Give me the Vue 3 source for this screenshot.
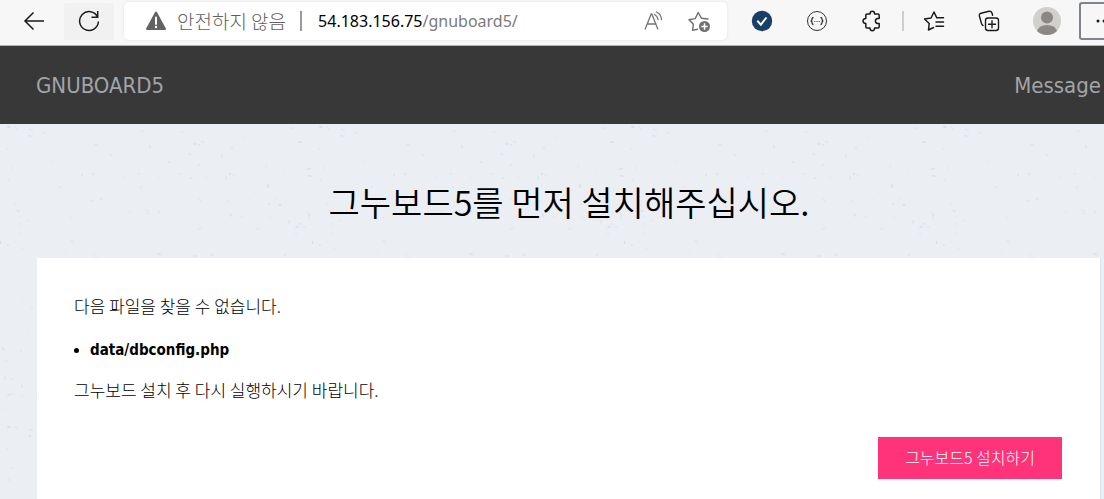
<script setup>
import { ref } from 'vue'

const host = ref('54.183.156.75')
const path = ref('/gnuboard5/')

// Deterministic flecks for the paper background tile
let seed = 41
const rnd = () => {
  seed = (seed * 16807) % 2147483647
  return seed / 2147483647
}
const flecks = Array.from({ length: 210 }, () => {
  const x = Math.round(rnd() * 312)
  const y = Math.round(rnd() * 300)
  return {
    x,
    y,
    rx: 1 + rnd() * 1.4,
    ry: 0.6 + rnd() * 0.6,
    turn: `rotate(${Math.round(rnd() * 90 - 20)} ${x} ${y})`,
    opacity: 0.2 + rnd() * 0.6
  }
})
</script>

<template>
  <div class="window">
    <nav class="toolbar" aria-label="브라우저">
      <button class="tool back" type="button" aria-label="뒤로">
        <svg width="22" height="22" viewBox="0 0 22 22" fill="none" stroke="#1b1b1b" stroke-width="1.5">
          <path d="M10.500 2.500 2 11l8.500 8.500M2 11h19" />
        </svg>
      </button>
      <button class="tool reload" type="button" aria-label="새로 고침">
        <svg width="22" height="22" viewBox="0 0 22 22" fill="none" stroke="#1b1b1b" stroke-width="1.500">
          <path d="M19.500 7A9.400 9.400 0 1 0 20.400 11.500M19.700 1v6.200h-6.200" />
        </svg>
      </button>

      <div class="address">
        <svg width="22" height="20" viewBox="0 0 22 20">
          <path d="M11 1.500 20 18H2z" fill="#636363" stroke="#636363" stroke-width="2" stroke-linejoin="round" />
          <path d="M11 6.500v6.500" stroke="#fff" stroke-width="2" stroke-linecap="round" />
          <circle cx="11" cy="16" r="1.200" fill="#fff" />
        </svg>
        <span class="insecure">안전하지 않음</span>
        <span class="bar"></span>
        <a class="url" href="#"><span class="host">{{ host }}</span>{{ path }}</a>
        <button class="icon" type="button" aria-label="소리내어 읽기">
          <svg width="22" height="22" viewBox="0 0 22 22" fill="none" stroke="#767676" stroke-width="1.300">
            <path d="M2 19.500 8.200 4h.6L15 19.500M4.200 14h8.600" />
            <path d="M11.500 4.500q3 1.500 3.500 5M13.500 2q4.500 2 5 7.500" stroke-linecap="round" />
          </svg>
        </button>
        <button class="icon star" type="button" aria-label="즐겨찾기에 추가">
          <svg width="24" height="24" viewBox="0 0 24 24" fill="none">
            <path d="M10.500 20.200 5.600 21.400 6.400 15.200 2 10.700 8.200 9.600 11.200 3.500 14.400 9.200 21 10" stroke="#707070" stroke-width="1.400" stroke-linejoin="round" stroke-linecap="round" />
            <circle cx="17.500" cy="17.500" r="5.500" fill="#707070" />
            <path d="M17.500 14.300v6.400M14.300 17.500h6.400" stroke="#fff" stroke-width="1.500" />
          </svg>
        </button>
      </div>

      <div class="extensions">
        <button class="icon" type="button" aria-label="확인">
          <svg width="22" height="22" viewBox="0 0 22 22" fill="none">
            <circle cx="11" cy="11" r="10.200" fill="#173f68" />
            <path d="m6.300 10.800 3.600 3.800L15.500 7.500" stroke="#fff" stroke-width="2" />
          </svg>
        </button>
        <button class="icon" type="button" aria-label="JSON">
          <svg width="22" height="22" viewBox="0 0 22 22" fill="none" stroke="#333">
            <circle cx="11" cy="11" r="9.500" />
            <path d="M7.500 7.500q-1.500 0-1.500 1.800 0 1.500-1.300 1.700 1.300.2 1.300 1.700 0 1.800 1.500 1.800M14.500 7.500q1.500 0 1.500 1.800 0 1.500 1.300 1.700-1.300.2-1.300 1.700 0 1.800-1.500 1.800" stroke-width="1.300" />
            <path d="M8.300 11.500h1M10.500 11.500h1M12.700 11.500h1" />
          </svg>
        </button>
        <button class="icon" type="button" aria-label="확장">
          <svg width="22" height="22" viewBox="0 0 22 22" fill="none" stroke="#1b1b1b" stroke-width="1.500" stroke-linejoin="round">
            <path d="M6 4h3q0-2.700 2.300-2.700T13.600 4H17q1.200 0 1.200 1.200V8.500h-1.500q-2.300.3-2.300 2.500t2.300 2.500h1.500v3.300q0 1.200-1.200 1.200h-3.400q0 2.700-2.300 2.700T9 18H6q-1.200 0-1.200-1.200v-3.300Q2 13.300 2 11t2.800-2.500V5.200Q4.800 4 6 4z" />
          </svg>
        </button>
        <span class="divider"></span>
        <button class="icon" type="button" aria-label="즐겨찾기">
          <svg width="22" height="22" viewBox="0 0 22 22" fill="none" stroke="#1b1b1b" stroke-width="1.500" stroke-linejoin="round" stroke-linecap="round">
            <path d="M10.500 17.500 5.500 20 6.200 13.500 1.500 9 8 8 11 2 13.800 7.800H20.500M13 12h7.500M13 16.200h7.500" />
          </svg>
        </button>
        <button class="icon" type="button" aria-label="컬렉션">
          <svg width="22" height="22" viewBox="0 0 22 22" fill="none" stroke="#1b1b1b" stroke-width="1.400" stroke-linejoin="round" stroke-linecap="round">
            <rect x="7.500" y="8" width="13" height="12.500" rx="2.500" />
            <path d="M14 10.800v7M10.500 14.300h7M5 15.500Q4 15 3.500 13.500L1.400 6Q1 3.800 3 3.200L11 1.300Q13.300 1 14 3l.6 2.300" />
          </svg>
        </button>
        <button class="icon" type="button" aria-label="프로필">
          <svg width="28" height="28" viewBox="0 0 28 28">
            <circle cx="14" cy="14" r="14" fill="#d2d0cd" />
            <circle cx="14" cy="10.500" r="6" fill="#8a8784" />
            <path d="M4 24Q6 18 14 18t10 6q-4 4-10 4T4 24" fill="#8a8784" />
          </svg>
        </button>
      </div>
      <button class="more" type="button" aria-label="설정 및 기타">
        <svg width="22" height="22" viewBox="0 0 22 22" fill="#1b1b1b">
          <circle cx="5" cy="11" r="1.500" />
          <circle cx="11" cy="11" r="1.500" />
          <circle cx="17" cy="11" r="1.500" />
        </svg>
      </button>
    </nav>

    <header class="banner">
      <span>GNUBOARD5</span>
      <span>Message</span>
    </header>

    <main class="page">
      <svg class="paper" width="100%" height="100%" aria-hidden="true">
        <defs>
          <pattern id="paper" width="312" height="300" patternUnits="userSpaceOnUse">
            <ellipse v-for="(f, i) in flecks" :key="i" :cx="f.x" :cy="f.y" :rx="f.rx" :ry="f.ry" :transform="f.turn" :opacity="f.opacity" fill="#d8dde3" />
          </pattern>
        </defs>
        <rect width="100%" height="100%" fill="url(#paper)" />
      </svg>
      <h1>그누보드5를 먼저 설치해주십시오.</h1>
      <section class="card">
        <p>다음 파일을 찾을 수 없습니다.</p>
        <ul>
          <li><strong>data/dbconfig.php</strong></li>
        </ul>
        <p>그누보드 설치 후 다시 실행하시기 바랍니다.</p>
        <div class="actions">
          <a class="install" href="#">그누보드5 설치하기</a>
        </div>
      </section>
    </main>
  </div>
</template>

<style>
body {
  background: #ebeff4;
  overflow: hidden;
}
</style>

<style scoped>
.window {
  display: flex;
  flex-direction: column;
  min-height: 100vh;
  overflow: hidden;
  color: #000;
  font-family: "Liberation Sans", "Noto Sans CJK KR", sans-serif;
}
button {
  display: flex;
  align-items: center;
  justify-content: center;
  margin: 0;
  padding: 0;
  border: 0;
  background: none;
}
svg {
  display: block;
  flex: none;
}
.toolbar {
  display: flex;
  align-items: center;
  height: 46px;
  padding: 0 0 3px 9px;
  box-sizing: border-box;
  background: #f7f7f7;
  border-bottom: 1px solid #b4b4b4;
}
.tool {
  width: 50px;
  height: 37px;
  border-radius: 3px;
}
.reload {
  margin-left: 5px;
  background: #f1f1f1;
}
.address {
  display: flex;
  flex: 1;
  align-items: center;
  height: 38px;
  margin-left: 10px;
  padding: 0 16px 0 21px;
  background: #fff;
  border-radius: 5px;
  box-shadow: 0 0 3px #e2e2e2;
}
.insecure {
  margin-left: 10px;
  color: #606060;
  font: 300 19px/28px "Noto Sans CJK KR", sans-serif;
}
.bar {
  width: 2px;
  height: 20px;
  margin: 0 16px 0 14px;
  background: #9a9a9a;
}
.url {
  flex: 1;
  color: #7a7a7a;
  font: 16px/24px "Noto Sans", sans-serif;
  text-decoration: none;
}
.host {
  color: #000;
}
.star {
  margin-left: 22px;
}
.extensions {
  display: flex;
  align-items: center;
  gap: 33px;
  margin-left: 24px;
}
.divider {
  width: 2px;
  height: 20px;
  margin: 0 -14px;
  background: #cecece;
}
.more {
  justify-content: flex-start;
  width: 25px;
  height: 38px;
  margin-left: 18px;
  padding-left: 12px;
  box-sizing: border-box;
  overflow: hidden;
  border: 2px solid #80848c;
  border-right: 0;
  border-radius: 3px 0 0 3px;
}
.banner {
  display: flex;
  align-items: center;
  justify-content: space-between;
  height: 78px;
  padding: 2px 3px 0 36px;
  box-sizing: border-box;
  background: #383838;
  color: #a1a5a9;
  font: 22px/32px "DejaVu Sans Condensed", "DejaVu Sans", sans-serif;
}
.page {
  position: relative;
  display: flex;
  flex: 1;
  flex-direction: column;
  padding: 0 3px 0 37px;
  background: #ebeff4;
}
.paper {
  position: absolute;
  inset: 0;
}
h1 {
  position: relative;
  margin: 0;
  padding: 54px 0 32px;
  font: 350 34px/48px "Noto Sans CJK KR", sans-serif;
  text-align: center;
}
.card {
  position: relative;
  flex: 1;
  padding: 36px 38px 20px 37px;
  background: #fff;
  border-right: 1px solid #dbe5ef;
}
p,
ul {
  margin: 0 0 18px;
  font: 300 17px/24px "Noto Sans CJK KR", sans-serif;
}
ul {
  padding-left: 16px;
}
li::marker {
  font-size: 12px;
}
strong {
  font: bold 15px/20px "DejaVu Sans Condensed", "DejaVu Sans", sans-serif;
}
.actions {
  display: flex;
  justify-content: flex-end;
  margin-top: 35px;
}
.install {
  padding: 8px 27px 10px;
  background: #ff3379;
  color: #fff;
  font: 300 16px/24px "Noto Sans CJK KR", sans-serif;
  text-decoration: none;
}
</style>
